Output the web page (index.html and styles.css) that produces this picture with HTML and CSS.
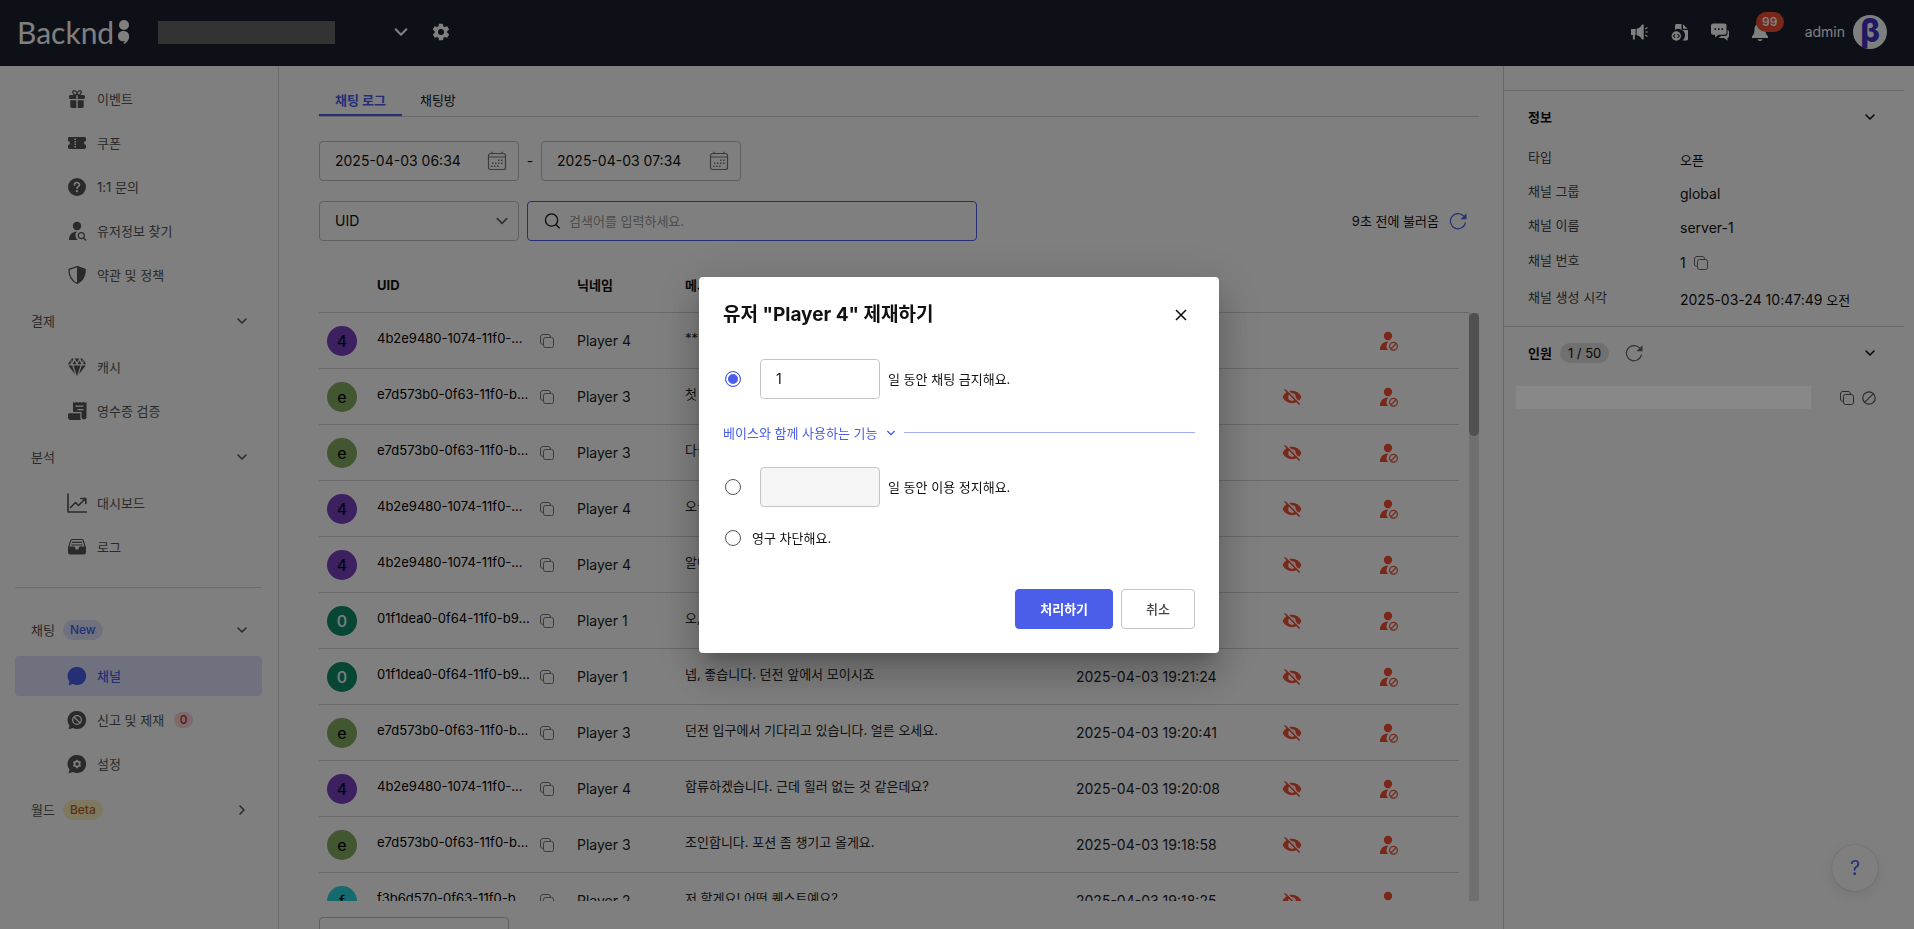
FILE: index.html
```html
<!DOCTYPE html>
<html lang="ko">
<head>
    <meta charset="UTF-8">
    <title>Backnd 콘솔 - 채팅 채널</title>
    <link rel="stylesheet" href="styles.css">
</head>
<body>
    <!-- 아이콘 모음 -->
    <svg class="sprite" width="0" height="0">
        <symbol id="i-down" viewBox="0 0 12 12"><path d="M2 4l4 4 4-4" fill="none" stroke="currentColor" stroke-width="1.6" stroke-linecap="round" stroke-linejoin="round"/></symbol>
        <symbol id="i-right" viewBox="0 0 12 12"><path d="M4 2l4 4-4 4" fill="none" stroke="currentColor" stroke-width="1.6" stroke-linecap="round" stroke-linejoin="round"/></symbol>
        <symbol id="i-close" viewBox="0 0 12 12"><path d="M1 1l10 10M11 1L1 11" fill="none" stroke="currentColor" stroke-width="1.6"/></symbol>
        <symbol id="i-gear" viewBox="0 0 24 24"><path fill="currentColor" d="M19.4 13c.1-.3.1-.6.1-1s0-.7-.1-1l2.100-1.600c.2-.2.2-.4.1-.6l-2-3.500c-.1-.2-.4-.3-.6-.2l-2.500 1c-.5-.4-1.100-.7-1.700-1l-.4-2.600c0-.3-.2-.5-.5-.5h-4c-.3 0-.5.2-.5.5l-.4 2.600c-.6.3-1.200.6-1.700 1l-2.500-1c-.2-.1-.5 0-.6.2l-2 3.500c-.1.2-.1.5.1.6L4.500 11c0 .3-.1.6-.1 1s0 .7.1 1l-2.100 1.600c-.2.200-.2.400-.1.600l2 3.500c.1.200.4.300.6.200l2.500-1c.5.400 1.100.700 1.700 1l.4 2.600c0 .3.2.500.5.500h4c.3 0 .5-.2.5-.5l.4-2.600c.6-.3 1.200-.6 1.700-1l2.500 1c.2.100.5 0 .6-.2l2-3.500c.1-.2.1-.5-.1-.6zM12 15.600a3.600 3.600 0 1 1 0-7.200 3.600 3.600 0 0 1 0 7.200z"/></symbol>
        <symbol id="i-gift" viewBox="0 0 20 20"><g fill="currentColor"><path d="M2 7.500C2 6.700 2.700 6 3.500 6H9.300v4H3.300C2.600 10 2 9.500 2 8.800zM10.700 6h5.800c.8 0 1.500.7 1.500 1.500v1.300c0 .7-.6 1.200-1.300 1.200h-6zM3.300 11.200h6V19H5.200c-1 0-1.900-.8-1.900-1.800zM10.700 11.200h6v6c0 1-.9 1.800-1.900 1.800h-4.100z"/></g><path d="M9.500 6C5.500 6 4.800 1.700 7.200 1.600 9 1.600 10 4 10 6c0-2 1-4.400 2.800-4.400C15.200 1.700 14.500 6 10.500 6" fill="none" stroke="currentColor" stroke-width="1.300"/></symbol>
        <symbol id="i-coupon" viewBox="0 0 20 20"><path fill="currentColor" fill-rule="evenodd" d="M2.500 4h15c.8 0 1.500.6 1.500 1.400V8a2 2 0 0 0 0 4v2.600c0 .8-.7 1.400-1.500 1.400h-15C1.700 16 1 15.400 1 14.600V12a2 2 0 0 0 0-4V5.400C1 4.600 1.700 4 2.500 4zM7.400 5.500v1.600h1.500V5.500zM7.400 8v1.600h1.500V8zM7.400 10.500v1.600h1.500v-1.600zM7.400 13v1.500h1.500V13z"/></symbol>
        <symbol id="i-help" viewBox="0 0 20 20"><circle cx="10" cy="10" r="9" fill="currentColor"/><path d="M7.500 8c0-3.200 5-3.200 5-.2 0 1.900-2.500 1.900-2.500 3.700" fill="none" stroke="#fff" stroke-width="1.600" stroke-linecap="round"/><circle cx="10" cy="14.200" r="1.100" fill="#fff"/></symbol>
        <symbol id="i-user-search" viewBox="0 0 20 20"><g fill="currentColor"><circle cx="10" cy="5" r="4.200"/><path d="M2 19c0-5.400 3-8.200 8-8.500a6 6 0 0 0 .6 8.500z"/></g><g fill="none" stroke="currentColor" stroke-width="1.200"><circle cx="14.300" cy="14.700" r="3"/><path d="M16.500 17l2.500 2.500"/></g></symbol>
        <symbol id="i-shield" viewBox="0 0 20 20"><path d="M10 1.600l8 2.700c.2 6.500-2 11.200-8 14.200-6-3-8.200-7.700-8-14.200z" fill="none" stroke="currentColor" stroke-width="1.300" stroke-linejoin="round"/><path d="M10 1l8.500 3c.3 7-2.200 12-8.500 15z" fill="currentColor"/></symbol>
        <symbol id="i-diamond" viewBox="0 0 20 20"><g fill="currentColor"><path d="M4.300 1.500h2.500L4.500 6zM7.800 1.500h4.400L10 5.600zM13.200 1.500h2.500L15.500 6zM3.500 2.500l.2 4.700H1zM16.500 2.500l2.500 4.700h-2.700zM5.500 7.200l2-3.700 2 3.700zM10.500 7.200l2-3.700 2 3.700zM1.200 8.400h4l3 9zM6.500 8.400h7L10 19.200zM14.800 8.400h4l-7 9z"/></g></symbol>
        <symbol id="i-receipt" viewBox="0 0 20 20"><path fill="currentColor" fill-rule="evenodd" d="M6 1l1.800.8L9.500 1l1.700.8L13 1l1.700.8L16.500 1l1.700.8L19.500 1v15.500a2.600 2.600 0 0 1-5 0V11H6zM8.500 4.500v1.300h8V4.500zM10.500 8v1.300h6V8z"/><path fill="currentColor" d="M2.500 12.200h10.800v4.500c0 1 .3 1.700.8 2.300H3.500C2 19 1 17.700 1 16v-2.300c0-.8.700-1.500 1.500-1.500z"/></symbol>
        <symbol id="i-chart" viewBox="0 0 20 20"><path d="M1 1v18h18.500M3.500 14.500L8.500 9.500l3 3 6.500-6.500M13.800 5.500H18.800V10.500" fill="none" stroke="currentColor" stroke-width="1.600" stroke-linecap="round" stroke-linejoin="round"/></symbol>
        <symbol id="i-log" viewBox="0 0 20 20"><path d="M1.800 10L3.600 3.800c.2-.8.8-1.300 1.600-1.300h9.600c.8 0 1.400.5 1.600 1.300L18.200 10M4.800 5.400h10.400M4.300 8h11.400" fill="none" stroke="currentColor" stroke-width="1.200"/><path fill="currentColor" d="M1 9.500h6.500l1 1.500v1.500h3V11l1-1.500H19V15a2.500 2.500 0 0 1-2.500 2.500h-13A2.500 2.500 0 0 1 1 15z"/></symbol>
        <symbol id="i-bubble" viewBox="0 0 20 20"><path fill="currentColor" d="M10 1a9 9 0 1 1-4 17L1.500 19.200l1-3.700A9 9 0 0 1 10 1z"/></symbol>
        <symbol id="i-bubble-ban" viewBox="0 0 20 20"><use href="#i-bubble"/><g fill="none" stroke="#fff" stroke-width="1.300"><circle cx="10" cy="10" r="4.300"/><path d="M7 7l6 6"/></g></symbol>
        <symbol id="i-bubble-gear" viewBox="0 0 20 20"><use href="#i-bubble"/><circle cx="10" cy="10" r="2.500" fill="none" stroke="#fff" stroke-width="1.800"/><path d="M10 5.700v8.600M6.300 7.900l7.400 4.300M6.300 12.100l7.400-4.300" stroke="#fff" stroke-width="1.500"/><circle cx="10" cy="10" r="1.700" fill="currentColor"/></symbol>
        <symbol id="i-megaphone" viewBox="0 0 20 20"><path fill="currentColor" d="M1 8c0-.6.400-1 1-1h3.600v6H4.800v4.500H2.900V13H2c-.6 0-1-.4-1-1zM6.600 6.800C9 6.500 10.500 5 12 2.500h1.700v15H12c-1.500-2.500-3-4-5.400-4.300z"/><path d="M15 7l2.500-1.500M15.200 10H18M15 13l2.500 1.500" stroke="currentColor" stroke-width="1.200"/></symbol>
        <symbol id="i-doc" viewBox="0 0 20 20"><path fill="currentColor" d="M5 8V3.500C5 2.700 5.700 2 6.500 2H11.500v4.500c0 .8.700 1.500 1.500 1.500H18v9c0 .8-.7 1.500-1.500 1.500h-4.200A6 6 0 0 0 5 8zM13 2.200L17.600 6.800H13z"/><circle cx="6.300" cy="14" r="4.700" fill="currentColor"/><path d="M5.300 12L3.500 14l1.800 2M7.500 12l1.800 2-1.800 2" fill="none" stroke="#1a202f" stroke-width="1.100"/></symbol>
        <symbol id="i-chat" viewBox="0 0 20 20"><path fill="currentColor" fill-rule="evenodd" d="M3 1.500h11.500c1 0 2 .9 2 2v7.300c0 1-1 2-2 2H8.500L5 15.500v-2.700H3c-1 0-2-1-2-2V3.500c0-1 1-2 2-2zM4.500 6.300v1.600h1.600V6.300zM8 6.300v1.600h1.600V6.300zM11.500 6.300v1.600h1.600V6.300z"/><path fill="currentColor" d="M17.500 8c1 .2 1.500 1 1.500 1.800V14c0 1-.7 1.800-1.500 1.800v3L14 16H8.500l2.500-2h4c1.500 0 2.500-1 2.500-2.500z"/></symbol>
        <symbol id="i-bell" viewBox="0 0 20 20"><path fill="currentColor" d="M10 1.500c3.500 0 5.500 2.500 5.500 5.700 0 4 .8 5.300 2.500 7V16H2v-1.800c1.700-1.700 2.500-3 2.500-7 0-3.200 2-5.700 5.500-5.700zM7.500 17.200h5c-.5 2.400-4.500 2.400-5 0z"/></symbol>
        <symbol id="i-calendar" viewBox="0 0 20 20"><rect x="1.500" y="2.500" width="17" height="16" rx="2" fill="none" stroke="currentColor" stroke-width="1.200"/><path d="M1.500 6h17M5 .8v2.500M15 .8v2.500" stroke="currentColor" stroke-width="1.200"/><path d="M11 9.200h6M5 12.200h12M4 15.200h9" stroke="currentColor" stroke-width="1.500" stroke-dasharray="1.500 1.500"/></symbol>
        <symbol id="i-search" viewBox="0 0 20 20"><circle cx="9.500" cy="9" r="6.800" fill="none" stroke="currentColor" stroke-width="1.400"/><path d="M14.300 14l4.200 4.200" stroke="currentColor" stroke-width="1.500"/></symbol>
        <symbol id="i-refresh" viewBox="0 0 18 18"><path d="M14.800 4.200A7.600 7.600 0 1 0 16.500 10.500" fill="none" stroke="currentColor" stroke-width="1.200"/><path fill="currentColor" d="M17.500 1.200v6h-6z"/></symbol>
        <symbol id="i-copy" viewBox="0 0 14 14"><rect x="3.500" y="3.500" width="10" height="10" rx="2" fill="none" stroke="currentColor"/><path d="M3.500 10.500C1.500 10.500.5 9.500.5 8V3c0-1.500 1-2.500 2.500-2.500h5C9.500.5 10.300 1 10.500 3" fill="none" stroke="currentColor"/></symbol>
        <symbol id="i-ban" viewBox="0 0 14 14"><circle cx="7" cy="7" r="6.200" fill="none" stroke="currentColor" stroke-width="1.200"/><path d="M2.800 11.200l8.400-8.400" stroke="currentColor" stroke-width="1.200"/></symbol>
        <symbol id="i-eye-off" viewBox="0 0 20 20"><path fill="currentColor" fill-rule="evenodd" d="M.6 10C2.500 6 6 3.800 10 3.800S17.500 6 19.400 10c-1.900 4-5.400 6.200-9.400 6.200S2.500 14 .6 10zM10 6.200a3.800 3.800 0 1 0 0 7.600 3.800 3.800 0 0 0 0-7.600z"/><path fill="currentColor" d="M10 7.500a2.500 2.500 0 0 1 2.500 2.500c0 1-.5 1.700-1.200 2.100z"/><path d="M4 1.800l15 15.400" stroke="#fff" stroke-width="1.600"/><path d="M2.600 2.200l15 15.400" stroke="currentColor" stroke-width="1.500"/></symbol>
        <symbol id="i-user-ban" viewBox="0 0 20 20"><g fill="currentColor"><circle cx="9" cy="5" r="4.200"/><path d="M1 19c0-5.400 3-8.200 8-8.500l.5.100A6 6 0 0 0 9 19z"/></g><g fill="none" stroke="currentColor" stroke-width="1.200"><circle cx="14.500" cy="15.300" r="3.900"/><path d="M11.800 18l5.400-5.400"/></g></symbol>
    </svg>

    <header class="header">
        <a class="logo" href="#">Backnd<svg width="12" height="26" viewBox="0 0 12 26"><circle cx="6" cy="6" r="5"/><path d="M6 12a5.200 5.200 0 0 1 5.200 5.200c0 3.500-2 6-5 7.800l-1-1c1-.7 1.600-1.300 1.600-2A5.200 5.200 0 1 1 6 12z"/></svg></a>
        <span class="project-name"></span>
        <button class="icon-btn project-toggle" type="button" aria-label="프로젝트 선택"><svg width="16" height="16"><use href="#i-down"/></svg></button>
        <button class="icon-btn" type="button" aria-label="프로젝트 설정"><svg width="20" height="20"><use href="#i-gear"/></svg></button>
        <nav class="header-menu">
            <button class="icon-btn" type="button" aria-label="공지"><svg width="20" height="20"><use href="#i-megaphone"/></svg></button>
            <button class="icon-btn" type="button" aria-label="문서"><svg width="20" height="20"><use href="#i-doc"/></svg></button>
            <button class="icon-btn" type="button" aria-label="문의"><svg width="20" height="20"><use href="#i-chat"/></svg></button>
            <button class="icon-btn bell" type="button" aria-label="알림"><svg width="20" height="20"><use href="#i-bell"/></svg><span class="bell-count">99</span></button>
        </nav>
        <button class="account" type="button">admin<span class="account-img">β</span></button>
    </header>

    <div class="layout">
        <nav class="sidebar">
            <ul class="menu">
                <li><a href="#"><svg><use href="#i-gift"/></svg>이벤트</a></li>
                <li><a href="#"><svg><use href="#i-coupon"/></svg>쿠폰</a></li>
                <li><a href="#"><svg><use href="#i-help"/></svg>1:1 문의</a></li>
                <li><a href="#"><svg><use href="#i-user-search"/></svg>유저정보 찾기</a></li>
                <li><a href="#"><svg><use href="#i-shield"/></svg>약관 및 정책</a></li>
            </ul>
            <button class="category" type="button">결제<svg><use href="#i-down"/></svg></button>
            <ul class="menu">
                <li><a href="#"><svg><use href="#i-diamond"/></svg>캐시</a></li>
                <li><a href="#"><svg><use href="#i-receipt"/></svg>영수증 검증</a></li>
            </ul>
            <button class="category" type="button">분석<svg><use href="#i-down"/></svg></button>
            <ul class="menu">
                <li><a href="#"><svg><use href="#i-chart"/></svg>대시보드</a></li>
                <li><a href="#"><svg><use href="#i-log"/></svg>로그</a></li>
            </ul>
            <hr>
            <button class="category" type="button">채팅<span class="tag tag-new">New</span><svg><use href="#i-down"/></svg></button>
            <ul class="menu">
                <li><a class="active" href="#"><svg><use href="#i-bubble"/></svg>채널</a></li>
                <li><a href="#"><svg><use href="#i-bubble-ban"/></svg>신고 및 제재<span class="count">0</span></a></li>
                <li><a href="#"><svg><use href="#i-bubble-gear"/></svg>설정</a></li>
            </ul>
            <button class="category" type="button">월드<span class="tag tag-beta">Beta</span><svg><use href="#i-right"/></svg></button>
        </nav>

        <main class="content">
            <div class="tabs">
                <button class="tab active" type="button">채팅 로그</button>
                <button class="tab" type="button">채팅방</button>
            </div>

            <div class="filter">
                <div class="date-box">
                    <input type="text" value="2025-04-03 06:34" aria-label="시작 시각">
                    <svg width="20" height="20"><use href="#i-calendar"/></svg>
                </div>
                <span class="dash">-</span>
                <div class="date-box">
                    <input type="text" value="2025-04-03 07:34" aria-label="종료 시각">
                    <svg width="20" height="20"><use href="#i-calendar"/></svg>
                </div>
            </div>

            <div class="filter search-row">
                <div class="select-box">
                    <select aria-label="검색 기준"><option>UID</option></select>
                    <svg width="14" height="14"><use href="#i-down"/></svg>
                </div>
                <div class="search-box">
                    <svg width="18" height="18"><use href="#i-search"/></svg>
                    <input type="text" placeholder="검색어를 입력하세요." aria-label="검색어">
                </div>
                <span class="loaded">9초 전에 불러옴</span>
                <button class="icon-btn reload" type="button" aria-label="새로고침"><svg width="18" height="18"><use href="#i-refresh"/></svg></button>
            </div>

            <div class="table-wrap">
                <table class="chat-table">
                    <thead>
                        <tr><th></th><th>UID</th><th>닉네임</th><th>메시지</th><th>전송 시각</th><th></th><th></th></tr>
                    </thead>
                    <tbody id="chat-rows"></tbody>
                </table>
                <div class="scrollbar"><div class="scrollbar-thumb"></div></div>
            </div>

            <div class="pager">
                <select aria-label="페이지당 개수"><option></option></select>
            </div>
        </main>

        <aside class="detail">
            <section>
                <h2>정보<svg width="12" height="12"><use href="#i-down"/></svg></h2>
                <dl>
                    <div><dt>타입</dt><dd class="ko">오픈</dd></div>
                    <div><dt>채널 그룹</dt><dd>global</dd></div>
                    <div><dt>채널 이름</dt><dd>server-1</dd></div>
                    <div class="with-copy"><dt>채널 번호</dt><dd>1<button class="icon-btn" type="button" aria-label="복사"><svg width="14" height="14"><use href="#i-copy"/></svg></button></dd></div>
                    <div><dt>채널 생성 시각</dt><dd>2025-03-24 10:47:49 <span class="ko">오전</span></dd></div>
                </dl>
            </section>
            <section>
                <h2>인원<span class="people">1 / 50</span><button class="icon-btn" type="button" aria-label="새로고침"><svg width="18" height="18"><use href="#i-refresh"/></svg></button><svg width="12" height="12"><use href="#i-down"/></svg></h2>
                <div class="member">
                    <span class="member-name"></span>
                    <button class="icon-btn" type="button" aria-label="복사"><svg width="14" height="14"><use href="#i-copy"/></svg></button>
                    <button class="icon-btn" type="button" aria-label="제재"><svg width="14" height="14"><use href="#i-ban"/></svg></button>
                </div>
            </section>
        </aside>
    </div>

    <button class="help" type="button" aria-label="도움말">?</button>

    <!-- 제재 팝업 -->
    <div class="overlay">
        <form class="modal" role="dialog" aria-labelledby="modal-title">
            <div class="modal-head">
                <h1 id="modal-title">유저 "Player 4" 제재하기</h1>
                <button class="icon-btn" type="button" aria-label="닫기"><svg width="12" height="12"><use href="#i-close"/></svg></button>
            </div>
            <div class="choice">
                <input type="radio" name="ban" id="ban-chat" checked aria-label="채팅 금지">
                <input class="days" type="text" id="chat-days" value="1">
                <label for="chat-days">일 동안 채팅 금지해요.</label>
            </div>
            <button class="more" type="button">베이스와 함께 사용하는 기능<svg width="10" height="10"><use href="#i-down"/></svg></button>
            <div class="choice">
                <input type="radio" name="ban" id="ban-use" aria-label="이용 정지">
                <input class="days" type="text" id="use-days" disabled>
                <label for="use-days">일 동안 이용 정지해요.</label>
            </div>
            <div class="choice choice-text">
                <input type="radio" name="ban" id="ban-forever">
                <label for="ban-forever">영구 차단해요.</label>
            </div>
            <div class="modal-foot">
                <button class="btn btn-primary" type="button">처리하기</button>
                <button class="btn" type="button">취소</button>
            </div>
        </form>
    </div>

    <script src="script.js"></script>
</body>
</html>
```
FILE: styles.css
```css
* {
    margin: 0;
    padding: 0;
    box-sizing: border-box;
}
body {
    height: 100vh;
    display: flex;
    flex-direction: column;
    overflow: hidden;
    font-family: Inter, "Noto Sans CJK KR", sans-serif;
    font-size: 14px;
    line-height: 20px;
    color: #111;
    background-color: #fff;
}
button, input, select {
    font: inherit;
    color: inherit;
    background: none;
    border: none;
}
button {
    cursor: pointer;
}
a {
    color: inherit;
    text-decoration: none;
}
ul {
    list-style: none;
}
svg {
    display: block;
    flex-shrink: 0;
}
.sprite {
    position: absolute;
}
.ko {
    font-size: 13px;
}
.icon-btn {
    display: flex;
    align-items: center;
    justify-content: center;
}

/* 상단바 */
.header {
    flex-shrink: 0;
    height: 66px;
    display: flex;
    align-items: center;
    padding: 0 27px 2px 17px;
    background-color: #1a202f;
    color: #fff;
}
.logo {
    display: flex;
    align-items: center;
    justify-content: space-between;
    width: 113px;
    font-family: Lato, sans-serif;
    font-size: 30px;
    line-height: 30px;
}
.logo svg {
    fill: #fff;
}
.project-name {
    width: 177px;
    height: 23px;
    margin: 0 57px 0 28px;
    background-color: #666;
}
.project-toggle {
    margin: 0 22px 0 1px;
}
.header-menu {
    display: flex;
    gap: 20px;
    margin-left: auto;
    margin-right: 35px;
}
.bell {
    position: relative;
}
.bell-count {
    position: absolute;
    left: 6px;
    top: -10px;
    width: 28px;
    border-radius: 10px;
    background-color: #f04e30;
    font-size: 12px;
    font-weight: 600;
}
.account {
    display: flex;
    align-items: center;
    gap: 8px;
}
.account-img {
    width: 34px;
    height: 34px;
    border-radius: 50%;
    background-color: #fff;
    color: #4331c8;
    font-size: 32px;
    font-weight: 800;
    line-height: 32px;
}

.layout {
    flex: 1;
    min-height: 0;
    display: flex;
}

/* 왼쪽 메뉴 */
.sidebar {
    flex-shrink: 0;
    width: 279px;
    padding: 7px 16px 0 15px;
    border-right: 1px solid #d8d8d8;
    color: #555;
    font-size: 13px;
}
.menu {
    display: flex;
    flex-direction: column;
    gap: 4px;
    padding: 6px 0;
}
.menu a {
    display: flex;
    align-items: center;
    gap: 10px;
    height: 40px;
    padding-left: 52px;
    border-radius: 4px;
}
.menu svg {
    width: 20px;
    height: 20px;
}
.menu .active {
    background-color: #dfe4fc;
    color: #4a5eea;
    font-weight: 500;
}
.category {
    display: flex;
    align-items: center;
    width: 100%;
    height: 40px;
    padding: 0 14px 0 16px;
}
.category svg {
    width: 12px;
    height: 12px;
    margin-left: auto;
}
.sidebar hr {
    margin: 14px 0 22px;
    border: none;
    border-top: 1px solid #d8d8d8;
}
.tag {
    margin-left: 8px;
    padding: 0 7px;
    border-radius: 10px;
    font-size: 12px;
    font-weight: 500;
}
.tag-new {
    background-color: #dfe4fc;
    color: #4a5eea;
}
.tag-beta {
    background-color: #fdf1c0;
    color: #b4651a;
}
.count {
    width: 19px;
    border-radius: 8px;
    background-color: #fbd5d5;
    color: #c42626;
    font-size: 12px;
    font-weight: 500;
    line-height: 16px;
    text-align: center;
}

/* 본문 */
.content {
    flex: 1;
    min-width: 0;
    display: flex;
    flex-direction: column;
    padding: 20px 24px 0 40px;
}
.tabs {
    display: flex;
    gap: 2px;
    border-bottom: 1px solid #d0d0d0;
    font-size: 13px;
}
.tab {
    height: 30px;
    padding: 0 16px;
    border-bottom: 2px solid transparent;
}
.tab.active {
    border-color: #4a5eea;
    color: #4a5eea;
    font-weight: 700;
}
.filter {
    display: flex;
    align-items: center;
    margin-top: 24px;
}
.search-row {
    margin-top: 20px;
}
.date-box, .select-box, .search-box {
    display: flex;
    align-items: center;
    width: 200px;
    height: 40px;
    border: 1px solid #c0c0c0;
    border-radius: 4px;
}
.date-box {
    padding: 0 11px 0 15px;
    color: #111;
}
.date-box input {
    flex: 1;
    min-width: 0;
}
.date-box svg {
    color: #777;
}
.dash {
    width: 22px;
    text-align: center;
}
.select-box {
    position: relative;
    margin-right: 8px;
}
.select-box select {
    width: 100%;
    height: 100%;
    padding-left: 15px;
    appearance: none;
}
.select-box svg {
    position: absolute;
    right: 9px;
    color: #666;
    pointer-events: none;
}
.search-box {
    width: 450px;
    padding: 0 15px;
    gap: 8px;
    border-color: #4a5eea;
    font-size: 13px;
}
.search-box input {
    flex: 1;
}
.search-box input::placeholder {
    color: #999;
}
.loaded {
    margin-left: auto;
    font-size: 13px;
}
.reload {
    margin: 0 12px 0 10px;
    color: #4a5eea;
}

/* 채팅 로그 표 */
.table-wrap {
    position: relative;
    flex: 1;
    min-height: 0;
    margin-top: 16px;
}
.chat-table {
    display: flex;
    flex-direction: column;
    height: 100%;
}
.chat-table tr {
    display: grid;
    grid-template-columns: 58px 200px 108px 1fr 168px 96px 98px;
    align-items: center;
    height: 56px;
    padding-right: 21px;
    border-bottom: 1px solid #d0d0d0;
}
.chat-table thead {
    flex-shrink: 0;
    margin-right: 10px;
}
.chat-table thead tr {
    padding-right: 31px;
}
.chat-table tbody {
    flex: 1;
    min-height: 0;
    margin-right: 20px;
    overflow: hidden;
}
.chat-table th {
    font-size: 13px;
    font-weight: 700;
    text-align: left;
}
.chat-table td {
    color: #222;
}
.chat-table .message {
    padding-bottom: 5px;
    font-size: 13px;
    white-space: nowrap;
}
.uid {
    display: flex;
    align-items: center;
}
.uid span {
    width: 163px;
    padding-bottom: 5px;
    color: #000;
    font-size: 13px;
    white-space: nowrap;
}
.uid .icon-btn {
    color: #777;
}
.avatar {
    width: 30px;
    height: 30px;
    margin-left: 8px;
    border-radius: 50%;
    color: #000;
    font-size: 16px;
    line-height: 30px;
    text-align: center;
}
.avatar-4 {
    background-color: #7840c0;
}
.avatar-e {
    background-color: #84ac62;
}
.avatar-0 {
    background-color: #0f8a68;
    color: #fff;
    font-weight: 500;
}
.avatar-f {
    background-color: #2ad4dc;
}
.danger {
    width: 100%;
    color: #f04e30;
}
.scrollbar {
    position: absolute;
    top: 56px;
    right: 0;
    bottom: 0;
    width: 10px;
    background-color: #dedede;
}
.scrollbar-thumb {
    height: 21%;
    border-radius: 5px;
    background-color: #a0a0a0;
}
.pager {
    flex-shrink: 0;
    height: 28px;
    padding-top: 16px;
    overflow: hidden;
}
.pager select {
    width: 190px;
    height: 40px;
    border: 1px solid #c0c0c0;
    border-radius: 4px;
    appearance: none;
}

/* 오른쪽 채널 정보 */
.detail {
    flex-shrink: 0;
    width: 411px;
    padding: 24px 10px 0 0;
    border-left: 1px solid #d0d0d0;
}
.detail section {
    padding: 16px 28px 17px 24px;
    border-top: 1px solid #d0d0d0;
}
.detail h2 {
    display: flex;
    align-items: center;
    height: 20px;
    font-size: 13px;
    font-weight: 600;
}
.detail h2 > svg {
    margin-left: auto;
}
.detail h2 .icon-btn {
    margin-left: 16px;
    color: #666;
}
.detail dl {
    display: flex;
    flex-direction: column;
    gap: 12px;
    margin-top: 20px;
}
.detail dl div {
    display: flex;
}
.detail dt {
    width: 152px;
    color: #444;
    font-size: 13px;
}
.detail dd {
    padding-top: 4px;
    line-height: 18px;
}
.detail .with-copy {
    padding: 1px 0 3px;
}
.with-copy dd {
    display: flex;
    align-items: center;
    gap: 8px;
}
.with-copy .icon-btn {
    color: #666;
}
.people {
    margin-left: 8px;
    padding: 0 8px;
    border-radius: 10px;
    background-color: #e0e0e0;
    font-weight: 400;
}
.member {
    display: flex;
    align-items: center;
    gap: 8px;
    margin: 23px 0 0 -12px;
    color: #555;
}
.member-name {
    position: relative;
    z-index: 20;
    flex: 1;
    height: 23px;
    margin-right: 21px;
    background-color: #888;
}

.help {
    position: fixed;
    right: 36px;
    bottom: 38px;
    width: 46px;
    height: 46px;
    border-radius: 50%;
    background-color: #fff;
    box-shadow: 0 0 2px rgba(0, 0, 0, 0.2), 0 4px 16px rgba(0, 0, 0, 0.1);
    color: #4a5eea;
    font-size: 20px;
}

/* 팝업 */
.overlay {
    position: fixed;
    inset: 0;
    z-index: 10;
    display: flex;
    align-items: center;
    justify-content: center;
    padding-left: 4px;
    background-color: rgba(0, 0, 0, 0.5);
}
.modal {
    width: 520px;
    padding: 24px;
    border-radius: 4px;
    background-color: #fff;
    box-shadow: 0 11px 15px -7px rgba(0, 0, 0, 0.2), 0 24px 38px 3px rgba(0, 0, 0, 0.14), 0 9px 46px 8px rgba(0, 0, 0, 0.12);
    font-size: 13px;
}
.modal-head {
    display: flex;
    align-items: center;
    justify-content: space-between;
    margin-bottom: 30px;
    padding-right: 8px;
}
.modal-head h1 {
    font-size: 19px;
    font-weight: 700;
    line-height: 28px;
}
.choice {
    display: flex;
    align-items: center;
    gap: 8px;
}
.choice input[type="radio"] {
    appearance: none;
    width: 16px;
    height: 16px;
    margin: 0 11px 0 2px;
    border: 1px solid #555;
    border-radius: 50%;
}
.choice input[type="radio"]:checked {
    border-color: #4a5eea;
    background-color: #4a5eea;
    box-shadow: inset 0 0 0 2px #fff;
}
.choice .days {
    width: 120px;
    height: 40px;
    padding: 0 15px;
    border: 1px solid #c4c4c4;
    border-radius: 4px;
    font-size: 14px;
}
.choice .days:disabled {
    background-color: #f5f5f5;
}
.choice-text {
    gap: 0;
    margin-top: 21px;
}
.more {
    display: flex;
    align-items: center;
    gap: 8px;
    width: 100%;
    margin: 24px 0;
    color: #4a5eea;
}
.more::after {
    content: '';
    flex: 1;
    height: 1px;
    background-color: #a4aef4;
}
.modal-foot {
    display: flex;
    justify-content: flex-end;
    gap: 8px;
    margin-top: 41px;
}
.btn {
    height: 40px;
    padding: 0 24px;
    border: 1px solid #c4c4c4;
    border-radius: 4px;
    color: #444;
    font-weight: 500;
}
.btn-primary {
    border-color: #4a5eea;
    background-color: #4a5eea;
    color: #fff;
    font-weight: 700;
}
```
FILE: script.js
```js
// 채팅 로그 데이터
const rows = [
    ['4b2e9480-1074-11f0-...', 'Player 4', '*****', '2025-04-03 19:24:11'],
    ['e7d573b0-0f63-11f0-b...', 'Player 3', '첫 던전', '2025-04-03 19:23:51'],
    ['e7d573b0-0f63-11f0-b...', 'Player 3', '다들', '2025-04-03 19:23:11'],
    ['4b2e9480-1074-11f0-...', 'Player 4', '오늘', '2025-04-03 19:22:51'],
    ['4b2e9480-1074-11f0-...', 'Player 4', '알아요', '2025-04-03 19:22:11'],
    ['01f1dea0-0f64-11f0-b9...', 'Player 1', '오, 네', '2025-04-03 19:21:51'],
    ['01f1dea0-0f64-11f0-b9...', 'Player 1', '넵, 좋습니다. 던전 앞에서 모이시죠', '2025-04-03 19:21:24'],
    ['e7d573b0-0f63-11f0-b...', 'Player 3', '던전 입구에서 기다리고 있습니다. 얼른 오세요.', '2025-04-03 19:20:41'],
    ['4b2e9480-1074-11f0-...', 'Player 4', '합류하겠습니다. 근데 힐러 없는 것 같은데요?', '2025-04-03 19:20:08'],
    ['e7d573b0-0f63-11f0-b...', 'Player 3', '조인합니다. 포션 좀 챙기고 올게요.', '2025-04-03 19:18:58'],
    ['f3b6d570-0f63-11f0-b...', 'Player 2', '저 할게요! 어떤 퀘스트예요?', '2025-04-03 19:18:25']
];

function icon(id, size) {
    return `<svg width="${size}" height="${size}"><use href="#${id}"/></svg>`;
}

document.getElementById('chat-rows').innerHTML = rows.map(([uid, name, message, time]) => {
    // 이미 가려진 메시지는 숨기기 버튼이 없다
    const hidden = message.startsWith('*');
    return `<tr>
        <td><div class="avatar avatar-${uid[0]}">${uid[0]}</div></td>
        <td><div class="uid"><span>${uid}</span><button class="icon-btn" type="button" aria-label="복사">${icon('i-copy', 14)}</button></div></td>
        <td>${name}</td>
        <td class="message">${message}</td>
        <td>${time}</td>
        <td>${hidden ? '' : `<button class="icon-btn danger" type="button" aria-label="숨기기">${icon('i-eye-off', 20)}</button>`}</td>
        <td><button class="icon-btn danger" type="button" aria-label="제재하기">${icon('i-user-ban', 20)}</button></td>
    </tr>`;
}).join('');
```
